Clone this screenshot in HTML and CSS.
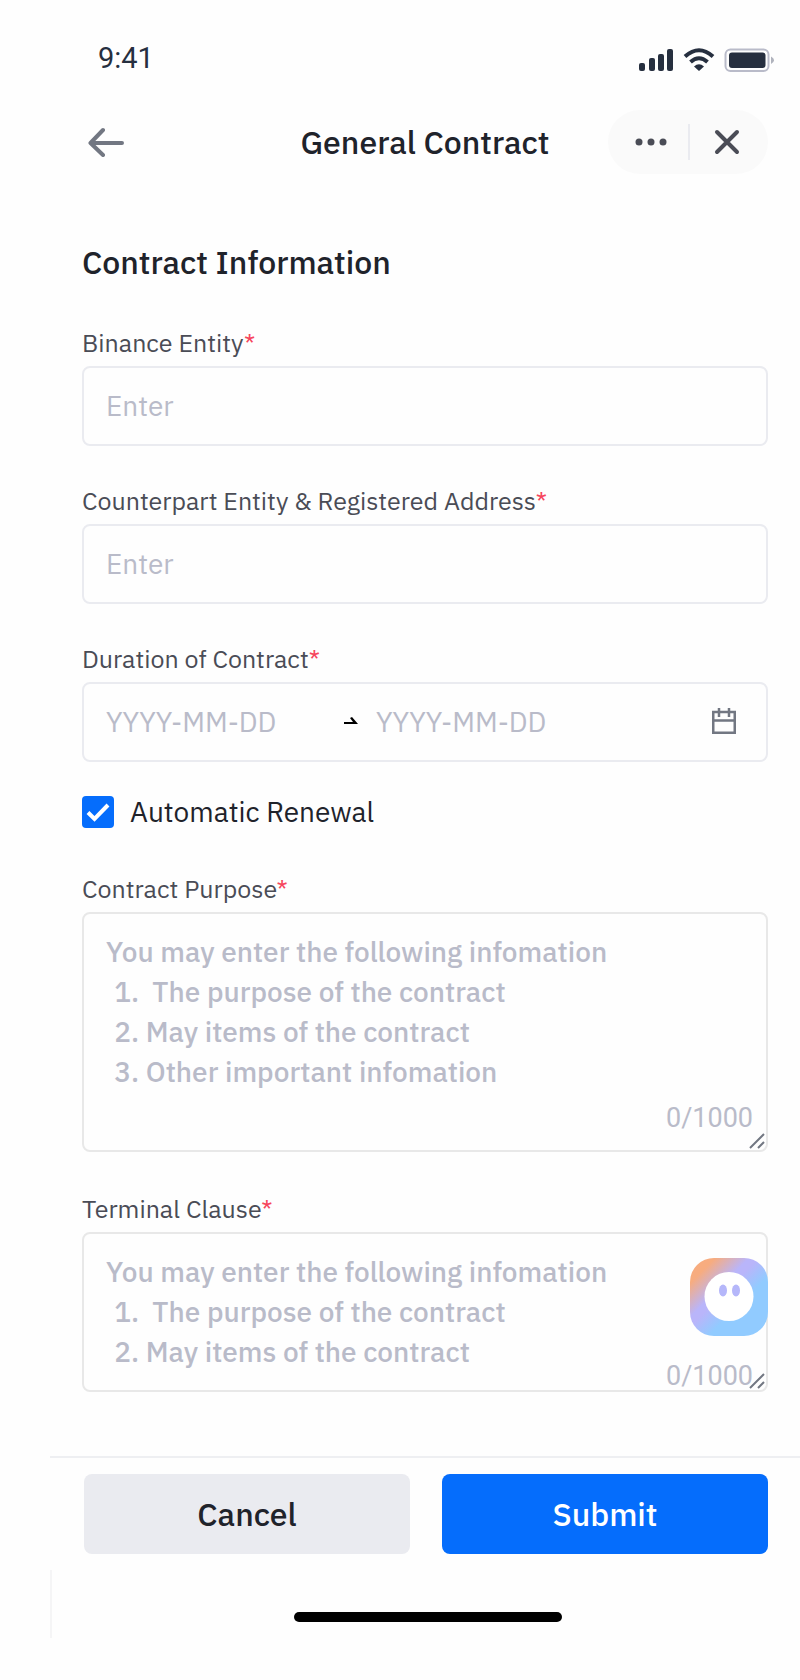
FILE: index.html
```html
<!DOCTYPE html>
<html lang="en">
  <head>
    <meta charset="utf-8">
    <meta name="viewport" content="width=device-width, initial-scale=1">
    <title>General Contract</title>
    <link rel="stylesheet" href="styles.css">
  </head>
  <body>
    <div class="page">
      <div class="statusbar">
        <span class="time">9:41</span>
        <svg class="status-icons" width="136" height="26" viewBox="0 0 136 26" aria-hidden="true">
          <g fill="#262f3f">
            <rect x="1" y="15" width="6" height="8" rx="2"/>
            <rect x="11" y="10" width="6" height="13" rx="2"/>
            <rect x="20" y="6" width="6" height="17" rx="2"/>
            <rect x="29" y="1" width="6" height="22" rx="2"/>
            <path d="M61 23 L56 18.500 Q61 14 66 18.500 Z"/>
            <rect x="91" y="4.500" width="36.500" height="15.500" rx="3"/>
          </g>
          <path d="M47 8.500 Q61 -4 75 8.500 M52.500 14 Q61 6.500 69.500 14" fill="none" stroke="#262f3f" stroke-width="4"/>
          <rect x="87.500" y="1.500" width="43" height="21.500" rx="5" fill="none" stroke="#b9bbc9" stroke-width="2"/>
          <path d="M133 8.500 Q136 10 136 12.200 Q136 14.500 133 16 Z" fill="#b0b3bd"/>
        </svg>
      </div>

      <header class="navbar">
        <button class="back" type="button" aria-label="Back">
          <svg width="36" height="30" viewBox="0 0 36 30" fill="none" stroke="#727782" stroke-width="4" stroke-linecap="round" stroke-linejoin="round">
            <path d="M15 3 L2.500 16 L15 28 M3 16 H34"/>
          </svg>
        </button>
        <h1>General Contract</h1>
        <div class="capsule">
          <button type="button" aria-label="More">
            <svg width="32" height="8" viewBox="0 0 32 8" fill="#4a4c56">
              <circle cx="4" cy="4" r="3.500"/><circle cx="16" cy="4" r="3.500"/><circle cx="28" cy="4" r="3.500"/>
            </svg>
          </button>
          <button type="button" aria-label="Close">
            <svg width="26" height="26" viewBox="0 0 26 26" stroke="#4a4c56" stroke-width="4" stroke-linecap="round">
              <path d="M3 3 L23 23 M23 3 L3 23"/>
            </svg>
          </button>
        </div>
      </header>

      <form id="contract" class="form">
        <h2>Contract Information</h2>

        <div class="field">
          <label for="entity">Binance Entity<span class="req">*</span></label>
          <input id="entity" class="box" type="text" placeholder="Enter">
        </div>

        <div class="field">
          <label for="counterpart">Counterpart Entity &amp; Registered Address<span class="req">*</span></label>
          <input id="counterpart" class="box" type="text" placeholder="Enter">
        </div>

        <div class="field">
          <label for="start">Duration of Contract<span class="req">*</span></label>
          <div class="box range">
            <input id="start" type="text" placeholder="YYYY-MM-DD">
            <svg width="14" height="8" viewBox="0 0 14 8" fill="#000"><path d="M0 5 H9 L6 1 L8 0 L14 7 H0 Z"/></svg>
            <input type="text" placeholder="YYYY-MM-DD" aria-label="End date">
            <button type="button" aria-label="Open calendar">
              <svg width="24" height="26" viewBox="0 0 24 26" fill="none" stroke="#727782" stroke-width="2.500">
                <path d="M1.250 4 H22.750 V24.750 H1.250 Z M1 12.500 H23 M7 0 V9 M17 0 V9"/>
              </svg>
            </button>
          </div>
        </div>

        <label class="check">
          <input type="checkbox" checked>
          <span>Automatic Renewal</span>
        </label>

        <div class="field">
          <label for="purpose">Contract Purpose<span class="req">*</span></label>
          <div class="area">
            <textarea id="purpose" class="box" maxlength="1000" placeholder="You may enter the following infomation
 &hairsp;1.  The purpose of the contract
 &hairsp;2. May items of the contract
 &hairsp;3. Other important infomation"></textarea>
            <span class="count">0/1000</span>
            <svg class="grip" width="16" height="16" viewBox="0 0 16 16"><path d="M1 15 L15 1 M9 15 L15 9"/></svg>
          </div>
        </div>

        <div class="field">
          <label for="clause">Terminal Clause<span class="req">*</span></label>
          <div class="area short">
            <textarea id="clause" class="box" maxlength="1000" placeholder="You may enter the following infomation
 &hairsp;1.  The purpose of the contract
 &hairsp;2. May items of the contract"></textarea>
            <span class="count">0/1000</span>
            <svg class="grip" width="16" height="16" viewBox="0 0 16 16"><path d="M1 15 L15 1 M9 15 L15 9"/></svg>
            <button class="assistant" type="button" aria-label="Assistant">
              <svg width="78" height="78" viewBox="0 0 78 78">
                <defs>
                  <linearGradient id="glow" x1="0" y1="0" x2="1" y2="1">
                    <stop offset=".16" stop-color="#f7ac7f"/>
                    <stop offset=".38" stop-color="#b9b5fa"/>
                    <stop offset=".44" stop-color="#b9b5fa"/>
                    <stop offset=".62" stop-color="#91cbff"/>
                  </linearGradient>
                </defs>
                <rect width="78" height="78" rx="24" fill="url(#glow)"/>
                <circle cx="39" cy="38.500" r="24.500" fill="#fff"/>
                <ellipse cx="33" cy="32.500" rx="4" ry="6" fill="#b5b7fa"/>
                <ellipse cx="46" cy="32.500" rx="4" ry="6" fill="#b5b7fa"/>
              </svg>
            </button>
          </div>
        </div>
      </form>

      <footer class="actions">
        <button class="btn" type="button">Cancel</button>
        <button class="btn primary" type="submit" form="contract">Submit</button>
      </footer>
      <div class="home"><span></span></div>
    </div>
  </body>
</html>
```
FILE: styles.css
```css
* { box-sizing: border-box; }

body {
  margin: 0;
  background: #fefefe;
  color: #1f232b;
  font-family: "IBM Plex Sans", Roboto, sans-serif;
}

button, input, textarea {
  font: inherit;
  color: inherit;
}
button { padding: 0; border: 0; background: none; cursor: pointer; }
svg { display: block; }

.page { margin-left: 50px; }

.statusbar {
  display: flex;
  justify-content: space-between;
  align-items: flex-end;
  height: 80px;
  padding: 0 26px 6px 48px;
}
.time { font-family: Roboto, sans-serif; font-size: 29px; line-height: 32px; color: #262f3f; }

.navbar {
  display: grid;
  grid-template-columns: 160px 1fr 160px;
  align-items: center;
  padding: 30px 32px 0;
}
.navbar h1 { margin: 0; text-align: center; font-size: 32px; line-height: 40px; font-weight: 500; white-space: nowrap; }
.back { justify-self: start; padding: 0 6px; }

.capsule { display: flex; height: 64px; padding: 14px 4px 14px 6px; border-radius: 32px; background: #fafafa; }
.capsule button { flex: 1; display: flex; align-items: center; justify-content: center; }
.capsule button + button { border-left: 2px solid #eaebf0; }

.form { padding: 68px 32px 64px; }
.form h2 { margin: 0 0 43px; font-size: 32px; line-height: 40px; font-weight: 500; }

.field { margin-bottom: 37px; }
.field label { display: block; margin-bottom: 5px; font-size: 25px; line-height: 36px; color: #4a4c56; }
.req { color: #f6465d; }

.box {
  display: block;
  width: 100%;
  height: 80px;
  padding: 0 22px 2px;
  border: 2px solid #eaebf0;
  border-radius: 8px;
  background: #fefefe;
  font-size: 28px;
  outline: none;
}
::placeholder { color: #b9bbc9; opacity: 1; }

.range { display: flex; align-items: center; padding-right: 30px; }
.range input { width: 238px; min-width: 0; padding: 0; border: 0; background: none; outline: none; }
.range svg + input { flex: 1; margin-left: 18px; }

.check { display: flex; align-items: center; gap: 16px; margin: -3px 0 43px; font-size: 28px; line-height: 32px; }
.check input {
  appearance: none;
  width: 32px;
  height: 32px;
  margin: 0;
  border-radius: 4px;
  background: #056dfc url("data:image/svg+xml,%3Csvg xmlns='http://www.w3.org/2000/svg' viewBox='0 0 32 32'%3E%3Cpath d='M6 16.500 L12.500 23 L26 9' fill='none' stroke='white' stroke-width='4'/%3E%3C/svg%3E");
}
.check input:not(:checked) { background: #eaebf0; }

.area { position: relative; margin-bottom: 39px; }
.area .box { height: 240px; padding: 18px 22px; line-height: 40px; border-color: #e8e8e8; resize: none; overflow: hidden; font-weight: 500; }
.area.short { margin-bottom: 0; }
.area.short .box { height: 160px; }
.count { position: absolute; right: 15px; bottom: 14px; font-family: Roboto, sans-serif; font-size: 27px; line-height: 40px; color: #b9bbc9; }
.short .count { bottom: -4px; }
.grip { position: absolute; right: 3px; bottom: 3px; stroke: #727782; stroke-width: 2; }
.assistant { position: absolute; top: 26px; right: 0; }

.actions {
  display: grid;
  grid-template-columns: 1fr 1fr;
  gap: 32px;
  padding: 16px 32px 16px 34px;
  border-top: 2px solid #eeeff2;
}
.form .field:last-child { margin-bottom: 0; }
.btn { height: 80px; border-radius: 8px; background: #eaebf0; font-size: 32px; font-weight: 500; }
.primary { background: #056dfc; color: #fff; }

.home { height: 68px; padding: 42px 0 0 4px; border-left: 2px solid #f5f5f6; }
.home span { display: block; width: 268px; height: 10px; margin: 0 auto; border-radius: 5px; background: #000; }
```
